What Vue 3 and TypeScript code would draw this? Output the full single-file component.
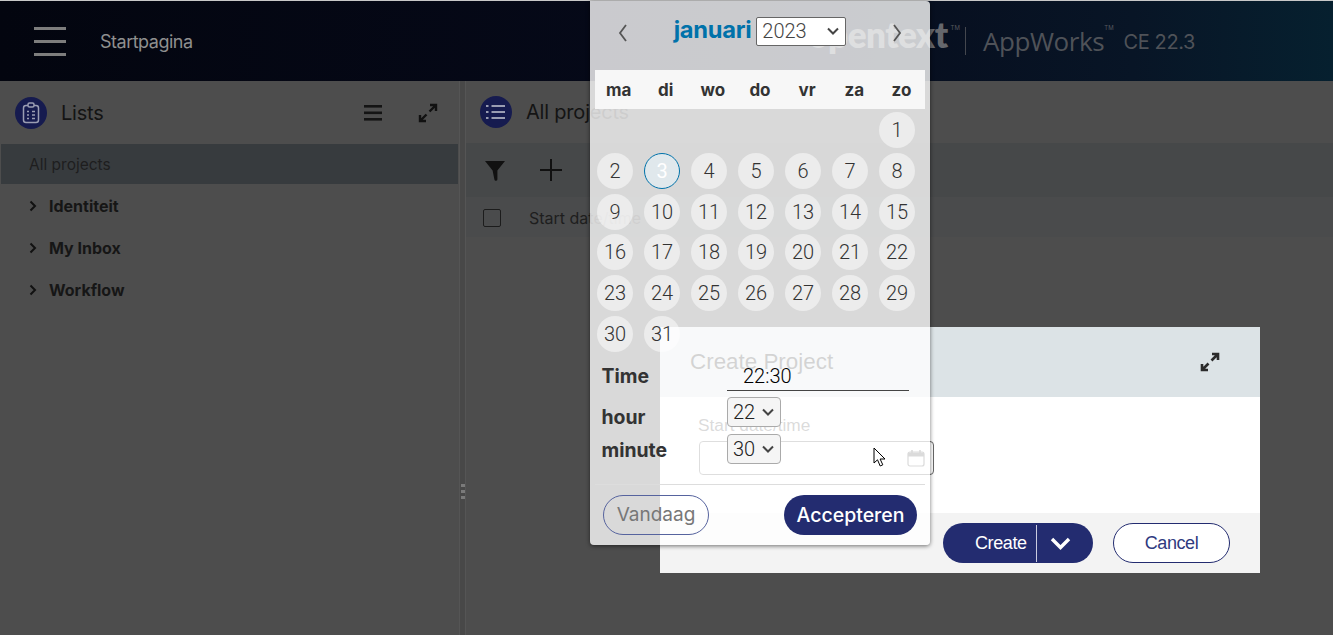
<template>
  <div class="page">
    <header class="topbar">
      <button class="menu-btn" aria-label="Menu"><span></span><span></span><span></span></button>
      <span class="page-name">Startpagina</span>
      <div class="brand">
        <span class="brand-logo">opentext</span><sup class="tm">TM</sup>
        <i class="brand-sep"></i>
        <span class="brand-app">AppWorks</span><sup class="tm tm-app">TM</sup>
        <span class="brand-ver">CE 22.3</span>
      </div>
    </header>

    <main class="workspace">
      <section class="panel panel-left">
        <div class="panel-head">
          <span class="round-icon">
            <svg width="20" height="22" viewBox="0 0 20 22" fill="none" stroke="#9a9db2" stroke-width="1.5">
              <rect x="2.5" y="3.5" width="15" height="17" rx="2.5" />
              <rect x="7" y="1" width="6" height="4" rx="1.500" fill="#161b4f" />
              <path d="M6 9.500h2M6 13h2M6 16.500h2M11 9.500h3M11 13h3M11 16.500h3" />
            </svg>
          </span>
          <h2 class="panel-title">Lists</h2>
          <svg class="tool-list" width="18" height="16" viewBox="0 0 18 16" fill="#141414">
            <rect y="0" width="18" height="2.600" /><rect y="6.500" width="18" height="2.600" /><rect y="13" width="18" height="2.600" />
          </svg>
          <svg class="tool-expand" width="20" height="20" viewBox="0 0 20 20" fill="none" stroke="#111" stroke-width="2.400">
            <path d="M12 2h6v6M18 2l-6.500 6.500M8 18H2v-6M2 18l6.500-6.500" />
          </svg>
        </div>
        <div class="list-selected">All projects</div>
        <div class="tree">
          <div v-for="item in treeItems" :key="item" class="tree-row">
            <svg width="8" height="12" viewBox="0 0 8 12" fill="none" stroke="#111" stroke-width="2"><path d="M1.500 1.500 6 6l-4.500 4.500" /></svg>
            <span>{{ item }}</span>
          </div>
        </div>
      </section>

      <div class="splitter"><span class="grip"><i></i><i></i><i></i></span></div>

      <section class="panel panel-right">
        <div class="panel-head head-right">
          <span class="round-icon">
            <svg width="20" height="16" viewBox="0 0 20 16" fill="none" stroke="#9a9db2" stroke-width="1.800">
              <path d="M0 2h2.500M5.500 2H19M0 8h2.500M5.500 8H19M0 14h2.500M5.500 14H19" />
            </svg>
          </span>
          <h2 class="panel-title">All projects</h2>
        </div>
        <div class="toolbar">
          <svg width="22" height="22" viewBox="0 0 22 22" fill="#111"><path d="M1 2h20l-7.600 9.500V20a1.500 1.500 0 0 1-3 .5L8.600 11.500z" /></svg>
          <svg class="tool-plus" width="22" height="22" viewBox="0 0 22 22" stroke="#111" stroke-width="2"><path d="M11 0v22M0 11h22" /></svg>
        </div>
        <div class="table-head">
          <span class="check"></span>
          <span class="col-label">Start date/time</span>
        </div>
      </section>
    </main>

    <div class="dialog">
      <div class="dialog-head">
        <h3>Create Project</h3>
        <svg width="20" height="20" viewBox="0 0 20 20" fill="none" stroke="#2b2b2b" stroke-width="2.600">
          <path d="M12 2h6v6M18 2l-6.500 6.500M8 18H2v-6M2 18l6.500-6.500" />
        </svg>
      </div>
      <div class="dialog-body">
        <label class="field-label">Start date/time</label>
        <div class="field-input">
          <svg width="18" height="18" viewBox="0 0 18 18" fill="none" stroke="#555" stroke-width="1.200">
            <rect x="1" y="3" width="16" height="14" rx="2" />
            <path d="M1 5.500h16" stroke-width="4" /><path d="M5 1v3M13 1v3" stroke-width="1.600" />
          </svg>
        </div>
      </div>
      <div class="dialog-foot">
        <div class="btn-create"><span class="create-text">Create</span><i class="create-sep"></i>
          <svg width="21" height="13" viewBox="0 0 21 13" fill="none" stroke="#fff" stroke-width="3.400"><path d="M2 2l8.500 8.500L19 2" /></svg>
        </div>
        <div class="btn-cancel">Cancel</div>
      </div>
    </div>

    <div class="calendar">
      <div class="cal-head">
        <svg width="9" height="18" viewBox="0 0 9 18" fill="none" stroke="#555" stroke-width="1.800"><path d="M8 1 2 9l6 8" /></svg>
        <div class="cal-title">
          <span class="cal-month">januari</span>
          <select class="cal-year"><option v-for="y in years" :key="y" :selected="y === 2023">{{ y }}</option></select>
        </div>
        <svg width="9" height="18" viewBox="0 0 9 18" fill="none" stroke="#555" stroke-width="1.800"><path d="m1 1 6 8-6 8" /></svg>
      </div>

      <div class="weekdays"><span v-for="d in weekdays" :key="d">{{ d }}</span></div>

      <div class="days">
        <span v-for="n in leadingBlanks" :key="'b' + n"></span>
        <span v-for="n in 31" :key="n" class="day" :class="{ today: n === 3 }">{{ n }}</span>
      </div>

      <div class="time-area">
        <div class="time-labels">
          <span>Time</span>
          <span>hour</span>
          <span>minute</span>
        </div>
        <div class="time-controls">
          <div class="time-value">22:30</div>
          <select class="time-select"><option selected>22</option><option>23</option></select>
          <select class="time-select"><option selected>30</option><option>31</option></select>
        </div>
      </div>

      <div class="cal-foot">
        <div class="btn-today">Vandaag</div>
        <div class="btn-accept">Accepteren</div>
      </div>
    </div>

    <svg class="cursor" width="14" height="21" viewBox="0 0 14 21">
      <path d="M1 1v15l3.500-3.200L7.200 19l2.600-1.200-2.700-5.800H12z" fill="#fff" stroke="#000" stroke-width="1" />
    </svg>
  </div>
</template>

<script setup lang="ts">
const treeItems: string[] = ['Identiteit', 'My Inbox', 'Workflow']
const weekdays: string[] = ['ma', 'di', 'wo', 'do', 'vr', 'za', 'zo']
const years: number[] = [2022, 2023, 2024]
// januari 2023 starts on a sunday
const leadingBlanks = 6
</script>

<style>
html, body { margin: 0; background: #4d4d4d; }
</style>

<style scoped>
.page {
  position: relative;
  width: 1333px;
  height: 635px;
  overflow: hidden;
  background: #4d4d4d;
  font-family: Inter, "Liberation Sans", sans-serif;
  color: #222;
}
.topbar {
  height: 80px;
  border-top: 1px solid #c8c8c8;
  display: flex;
  align-items: center;
  background: linear-gradient(90deg, #03050f 0, #060a1a 55%, #081526 85%, #06202f 100%);
}
.menu-btn {
  display: flex;
  flex-direction: column;
  gap: 10px;
  margin-left: 34px;
  padding: 0;
  border: 0;
  background: none;
}
.menu-btn span { display: block; width: 32px; height: 3px; background: #7d7d7d; }
.page-name { margin-left: 34px; font-size: 18px; color: #8f8f8f; letter-spacing: -.5px; }
.brand { display: flex; align-items: center; margin-left: auto; margin-right: 138px; }
.brand-logo { font: 800 35px Lato, sans-serif; color: #65676c; letter-spacing: -.5px; margin-bottom: 14px; }
.tm { font-size: 6px; color: #55585e; align-self: flex-start; margin: 11px 0 0 3px; }
.brand-sep { width: 1px; height: 28px; background: #44474e; margin: 0 17px 0 5px; }
.brand-app { font-size: 26px; font-family: "Open Sans", sans-serif; color: #4f5258; letter-spacing: -.4px; }
.tm-app { margin-left: 0; }
.brand-ver { font-size: 20px; color: #4f5258; margin: 2px 0 0 10px; letter-spacing: -.4px; }

.workspace { display: flex; height: 554px; }
.panel { min-width: 0; }
.panel-left { width: 459px; padding-left: 1px; box-sizing: border-box; }
.panel-right { flex: 1; }
.splitter {
  width: 7px;
  display: flex;
  justify-content: center;
  background: #484848;
  border-left: 1px solid #555;
  border-right: 1px solid #555;
  box-sizing: border-box;
}
.grip { display: flex; flex-direction: column; gap: 3px; margin-top: 403px; }
.grip i { display: block; width: 4px; height: 3px; background: #7a7a7a; }
.panel-head { height: 63px; display: flex; align-items: center; padding-left: 14px; }
.head-right { height: 62px; }
.round-icon {
  width: 32px;
  height: 32px;
  border-radius: 50%;
  background: #161b4f;
  display: flex;
  align-items: center;
  justify-content: center;
  flex-shrink: 0;
}
.panel-title { margin: 0 0 0 14px; font-size: 20px; font-weight: 400; color: #141414; letter-spacing: -.2px; }
.tool-list { margin-left: auto; }
.tool-expand { margin: 0 21px 0 36px; }
.list-selected {
  height: 40px;
  width: 457px;
  padding-left: 28px;
  box-sizing: border-box;
  display: flex;
  align-items: center;
  font-size: 15.500px;
  color: #1e1e1e;
  background: #373b3e;
}
.tree { padding-top: 1px; }
.tree-row {
  height: 42px;
  display: flex;
  align-items: center;
  gap: 12px;
  padding-left: 28px;
  font-size: 16px;
  font-weight: 700;
  color: #161616;
}
.toolbar {
  height: 54px;
  display: flex;
  align-items: center;
  padding-left: 18px;
  background: #464849;
}
.tool-plus { margin-left: 34px; }
.table-head {
  height: 40px;
  display: flex;
  align-items: center;
  padding: 2px 0 0 17px;
  box-sizing: border-box;
  background: #4a4b4c;
}
.check { width: 16px; height: 16px; border: 1px solid #1c1c1c; border-radius: 2px; margin-bottom: 1px; }
.col-label { margin-left: 28px; font-size: 16px; color: #1e1e1e; }

.dialog {
  position: absolute;
  left: 660px;
  top: 327px;
  width: 600px;
  height: 246px;
  display: flex;
  flex-direction: column;
  background: #fff;
  font-family: "Liberation Sans", sans-serif;
}
.dialog-head {
  height: 70px;
  display: flex;
  align-items: center;
  justify-content: space-between;
  padding: 0 40px 0 30px;
  background: #dce3e6;
  color: #333;
}
.dialog-head h3 { margin: 0 0 1px; font-size: 22.400px; font-weight: 400; }
.dialog-head svg { margin-bottom: 1px; }
.dialog-body { flex: 1; padding: 18px 0 0 38px; box-sizing: border-box; }
.field-label { display: block; font-size: 17.300px; color: #555; height: 26px; }
.field-input {
  width: 235px;
  height: 34px;
  margin-left: 1px;
  border: 1px solid #666;
  border-radius: 4px;
  box-sizing: border-box;
  display: flex;
  align-items: center;
  justify-content: flex-end;
  padding-right: 8px;
}
.dialog-foot {
  height: 60px;
  display: flex;
  align-items: center;
  justify-content: flex-end;
  gap: 20px;
  padding-right: 30px;
  background: #f3f3f3;
}
.btn-create {
  width: 150px;
  height: 40px;
  border-radius: 20px;
  display: flex;
  align-items: center;
  box-sizing: border-box;
  background: #232c70;
  color: #fff;
  font-size: 18px;
  letter-spacing: -.4px;
}
.create-text { margin-left: 32px; }
.create-sep { width: 1px; height: 37px; background: #c9cbe0; margin: 0 13px 0 9px; }
.btn-cancel {
  width: 117px;
  height: 40px;
  border: 1px solid #232c70;
  border-radius: 20px;
  box-sizing: border-box;
  display: flex;
  align-items: center;
  justify-content: center;
  background: #fff;
  color: #2f3a80;
  font-size: 18px;
  letter-spacing: -.4px;
}

.calendar {
  position: absolute;
  left: 590px;
  top: 1px;
  width: 340px;
  height: 544px;
  border-radius: 0 4px 4px 4px;
  background: rgba(255, 255, 255, .79);
  box-shadow: 0 1px 4px rgba(0, 0, 0, .55);
  color: #333;
}
.cal-head {
  height: 69px;
  display: flex;
  align-items: flex-start;
  justify-content: space-between;
  padding: 23px 28px 0;
  box-sizing: border-box;
}
.cal-title { display: flex; align-items: center; gap: 5px; margin: -9px 0 0 0; }
.cal-month { font-size: 23.700px; font-weight: 700; color: #0072aa; letter-spacing: -.3px; margin-bottom: 3px; }
.cal-year {
  width: 90px;
  height: 29px;
  padding-left: 5px;
  font: 300 20px Roboto, sans-serif;
  color: #444;
  border: 1px solid #666;
  border-radius: 2px;
  appearance: none;
  background: #fff url("data:image/svg+xml,%3Csvg xmlns='http://www.w3.org/2000/svg' width='12' height='8'%3E%3Cpath d='M1 1.500l5 5 5-5' fill='none' stroke='%23444' stroke-width='2'/%3E%3C/svg%3E") no-repeat right 6px center;
}
.weekdays {
  display: grid;
  grid-template-columns: repeat(7, 1fr);
  height: 39px;
  margin: 0 5px;
  align-items: center;
  text-align: center;
  background: #f7f7f7;
  font-size: 17px;
  font-weight: 700;
  color: #333;
}
.days {
  display: grid;
  grid-template-columns: repeat(7, 47px);
  grid-auto-rows: 40.700px;
  padding: 1px 0 0 1.500px;
  justify-items: center;
  align-items: center;
}
.day {
  width: 36px;
  height: 36px;
  border-radius: 50%;
  display: flex;
  align-items: center;
  justify-content: center;
  background: rgba(255, 255, 255, .5);
  font: 300 20px Roboto, sans-serif;
  color: #333;
}
.day.today {
  background: #e0e8ec;
  border: 1px solid #0072aa;
  box-sizing: border-box;
  color: #fff;
  font-weight: 400;
}
.time-area {
  display: flex;
  margin: 3.800px 0 0 11.500px;
}
.time-labels {
  width: 125.500px;
  display: flex;
  flex-direction: column;
  font-size: 19.400px;
  line-height: 24px;
  font-weight: 700;
  color: #333;
}
.time-labels span:nth-child(1) { margin-top: 6px; }
.time-labels span:nth-child(2) { margin-top: 17px; }
.time-labels span:nth-child(3) { margin-top: 9px; }
.time-controls { width: 182px; display: flex; flex-direction: column; align-items: flex-start; }
.time-value {
  width: 100%;
  height: 33px;
  padding-left: 16px;
  border-bottom: 1px solid #444;
  box-sizing: border-box;
  font: 300 20px/36px Roboto, sans-serif;
  color: #000;
}
.time-select {
  width: 54px;
  height: 30px;
  margin-top: 6px;
  padding-left: 5px;
  font: 300 20px Roboto, sans-serif;
  color: #222;
  border: 1px solid #aaa;
  border-radius: 4px;
  appearance: none;
  background: #f5f5f5 url("data:image/svg+xml,%3Csvg xmlns='http://www.w3.org/2000/svg' width='12' height='8'%3E%3Cpath d='M1 1.500l5 5 5-5' fill='none' stroke='%23444' stroke-width='2'/%3E%3C/svg%3E") no-repeat right 6px center;
}
.time-select:last-child { margin-top: 7px; }
.cal-foot {
  margin: 20px 5px 0;
  padding: 10px 8px 0;
  border-top: 1px solid #ddd;
  display: flex;
  justify-content: space-between;
}
.btn-today, .btn-accept {
  height: 40px;
  border-radius: 20px;
  display: flex;
  align-items: center;
  justify-content: center;
  box-sizing: border-box;
}
.btn-today { width: 106px; border: 1px solid #56639e; color: #777; font-size: 19px; }
.btn-accept { width: 133px; background: #232c70; color: #fff; font-weight: 500; font-size: 19.500px; }
.cursor { position: absolute; left: 873px; top: 447px; }
</style>
